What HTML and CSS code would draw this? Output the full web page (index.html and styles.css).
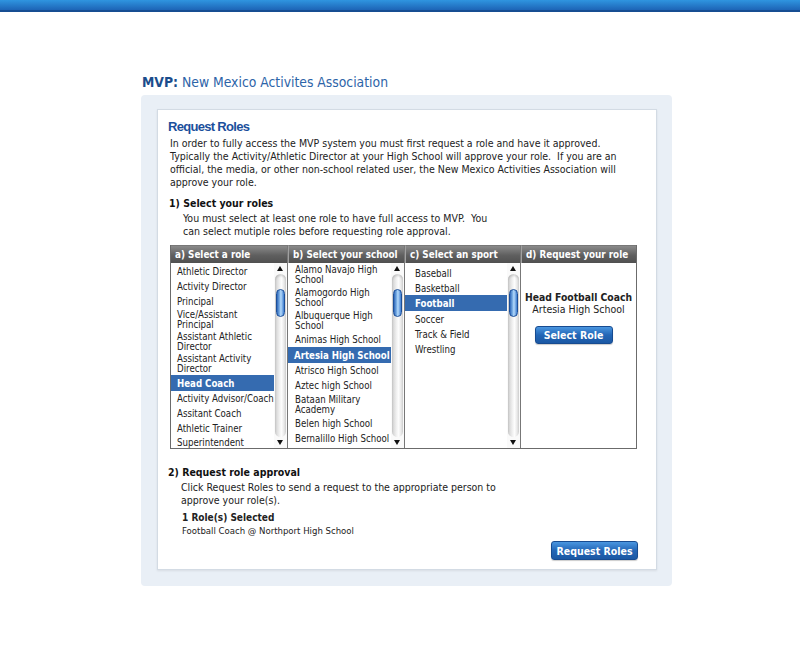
FILE: index.html
```html
<!DOCTYPE html>
<html>
<head>
<meta charset="utf-8">
<link rel="stylesheet" href="styles.css">
</head>
<body>
<div class="topbar"></div>
<div class="page">
  <h1 class="title"><b>MVP:</b> New Mexico Activites Association</h1>
  <div class="outer">
    <div class="inner">
      <h2 class="heading">Request Roles</h2>
      <p class="intro">In order to fully access the MVP system you must first request a role and have it approved. Typically the Activity/Athletic Director at your High School will approve your role.&nbsp; If you are an official, the media, or other non-school related user, the New Mexico Activities Association will approve your role.</p>
      <h3 class="step">1) Select your roles</h3>
      <p class="sub">You must select at least one role to have full access to MVP.&nbsp; You can select mutiple roles before requesting role approval.</p>

      <div class="picker">
        <div class="col">
          <div class="colhead">a) Select a role</div>
          <div class="colbody">
            <ul class="list roles">
              <li>Athletic Director</li>
              <li>Activity Director</li>
              <li>Principal</li>
              <li class="two">Vice/Assistant<br>Principal</li>
              <li class="two">Assistant Athletic<br>Director</li>
              <li class="two">Assistant Activity<br>Director</li>
              <li class="sel">Head Coach</li>
              <li>Activity Advisor/Coach</li>
              <li>Assitant Coach</li>
              <li>Athletic Trainer</li>
              <li class="lastitem">Superintendent</li>
            </ul>
            <div class="scroll"><div class="arrow up"></div><div class="track"><div class="thumb"></div></div><div class="arrow down"></div></div>
          </div>
        </div>
        <div class="col">
          <div class="colhead">b) Select your school</div>
          <div class="colbody">
            <ul class="list schools">
              <li class="two">Alamo Navajo High<br>School</li>
              <li class="two">Alamogordo High<br>School</li>
              <li class="two">Albuquerque High<br>School</li>
              <li>Animas High School</li>
              <li class="sel">Artesia High School</li>
              <li>Atrisco High School</li>
              <li>Aztec high School</li>
              <li class="two">Bataan Military<br>Academy</li>
              <li>Belen high School</li>
              <li>Bernalillo High School</li>
            </ul>
            <div class="scroll"><div class="arrow up"></div><div class="track"><div class="thumb"></div></div><div class="arrow down"></div></div>
          </div>
        </div>
        <div class="col">
          <div class="colhead">c) Select an sport</div>
          <div class="colbody">
            <ul class="list sports">
              <li>Baseball</li>
              <li>Basketball</li>
              <li class="sel">Football</li>
              <li>Soccer</li>
              <li>Track &amp; Field</li>
              <li>Wrestling</li>
            </ul>
            <div class="scroll"><div class="arrow up"></div><div class="track"><div class="thumb"></div></div><div class="arrow down"></div></div>
          </div>
        </div>
        <div class="col last">
          <div class="colhead">d) Request your role</div>
          <div class="colbody request">
            <div class="chosen"><b>Head Football Coach</b><span>Artesia High School</span></div>
            <button class="btn">Select Role</button>
          </div>
        </div>
      </div>

      <h3 class="step step2">2) Request role approval</h3>
      <p class="sub sub2">Click Request Roles to send a request to the appropriate person to approve your role(s).</p>
      <div class="selected">
        <b>1 Role(s) Selected</b>
        <span>Football Coach @ Northport High School</span>
      </div>
      <div class="actions"><button class="btn big">Request Roles</button></div>
    </div>
  </div>
</div>
</body>
</html>
```
FILE: styles.css
```css
html, body { margin: 0; padding: 0; background: #fff; }
body { font-family: "DejaVu Sans Condensed", "DejaVu Sans", sans-serif; color: #222; }

.topbar {
  height: 10px;
  background: linear-gradient(#2f95e0, #1d64b6);
  border-bottom: 2px solid #164d92;
}

.page { margin-left: 141px; width: 531px; }

.title {
  margin: 61px 0 0 1px;
  font-size: 13.8px;
  line-height: 18px;
  font-weight: normal;
  color: #2d64a8;
}
.title b { color: #1b4d8c; }

.outer {
  margin-top: 4px;
  background: #e9eff6;
  border-radius: 4px;
  padding: 14px 15px 16px 16px;
}
.inner {
  background: #fff;
  border: 1px solid #d3dbe4;
  box-shadow: 0 1px 2px rgba(0,0,0,0.08);
  height: 459px;
  box-sizing: content-box;
  padding: 0 19px 0 10px;
}

.heading {
  margin: 0;
  padding-top: 9px;
  font-family: "Liberation Sans", sans-serif;
  font-size: 13px;
  line-height: 16px;
  letter-spacing: -0.7px;
  color: #1b4f9c;
}
.intro {
  margin: 2px 0 0 2px;
  font-size: 10.5px;
  line-height: 13px;
}
.step {
  margin: 8px 0 0 1px;
  font-size: 10.5px;
  line-height: 13px;
  font-weight: bold;
  color: #111;
}
.sub {
  margin: 2px 0 0 15px;
  width: 320px;
  font-size: 10.5px;
  line-height: 13px;
}

.picker {
  margin: 7px 0 0 2px;
  width: 465px;
  display: grid;
  grid-template-columns: 117px 117px 116px 1fr;
  border: 1px solid #6b6b6b;
  border-top: 0;
}
.col { border-right: 1px solid #777; display: flex; flex-direction: column; min-width: 0; }
.col.last { border-right: 0; }
.colhead {
  height: 17px;
  line-height: 17px;
  padding-left: 4px;
  background: linear-gradient(#8a8a8a, #5f5f5f 55%, #505050);
  border-top: 1px solid #777;
  border-left: 1px solid #a0a0a0;
  color: #fff;
  font-weight: bold;
  font-size: 9.8px;
  white-space: nowrap;
  overflow: hidden;
}
.col:first-child .colhead { border-left: 0; }
.colbody { display: flex; height: 185px; }

.list {
  list-style: none;
  margin: 0;
  padding: 2px 0 0;
  flex: 1;
  min-width: 0;
  font-size: 9.6px;
  overflow: hidden;
  white-space: nowrap;
}
.list li {
  padding: 3px 0 3px 6px;
  line-height: 9px;
}
.list li.two {
  padding-top: 1px;
  padding-bottom: 1px;
  line-height: 10px;
}
.list li.sel {
  background: #356bb0;
  color: #fff;
  font-weight: bold;
  padding-top: 4px;
  padding-bottom: 3px;
}
.roles { padding-top: 1px; overflow: visible; }
.roles li.lastitem { padding-top: 2px; padding-bottom: 0; }
.schools { padding-top: 0; }
.schools li { padding-left: 7px; }
.schools li.two { padding-top: 2px; padding-bottom: 1px; }
.schools li.sel { padding-left: 6px; }
.sports li { padding: 4px 0 2px 10px; }
.sports li.sel { padding: 4px 0 3px 10px; }

.scroll {
  width: 13px;
  flex: none;
  display: flex;
  flex-direction: column;
  background: #fafafa;
}
.arrow { height: 11px; position: relative; }
.arrow::after {
  content: "";
  position: absolute;
  left: 3px;
  border-left: 3px solid transparent;
  border-right: 3px solid transparent;
}
.arrow.up::after { top: 3px; border-bottom: 5px solid #111; }
.arrow.down::after { top: 3px; border-top: 5px solid #111; }
.track {
  flex: 1;
  margin: 0 1px;
  border-radius: 6px;
  background: linear-gradient(90deg, #cfcfcf, #f4f4f4 45%, #fdfdfd 60%, #d8d8d8);
  box-shadow: inset 0 2px 2px rgba(0,0,0,0.15);
  padding-top: 15px;
}
.thumb {
  width: 9px;
  margin-left: 1px;
  height: 28px;
  border-radius: 5px;
  border: 1px solid #1c4f99;
  box-sizing: border-box;
  background: linear-gradient(90deg, #2c66b8, #8ec0f0 45%, #b9dcfb 55%, #3c7cd0);
}

.request {
  flex-direction: column;
  align-items: center;
  padding-top: 28px;
  box-sizing: border-box;
}
.chosen {
  display: flex;
  flex-direction: column;
  align-items: center;
  font-size: 10.5px;
  line-height: 12px;
}
.chosen b { font-size: 10.3px; }
.btn {
  font-family: "DejaVu Sans Condensed", "DejaVu Sans", sans-serif;
  background: linear-gradient(#4a96e0, #2366b6 50%, #1b58a4);
  border: 1px solid #174b90;
  border-radius: 3px;
  color: #fff;
  font-weight: bold;
  font-size: 10.5px;
  height: 18px;
  padding: 0;
  margin: 11px 10px 0 0;
  width: 78px;
  box-shadow: 0 1px 1px rgba(0,0,0,0.2);
}

.step2 { margin-top: 17px; margin-left: 0; }
.sub2 { margin-left: 13px; width: 340px; }
.selected {
  margin: 4px 0 0 14px;
  display: flex;
  flex-direction: column;
  line-height: 13px;
}
.selected b { font-size: 10px; }
.selected span { font-size: 9.5px; }
.actions { display: flex; justify-content: flex-end; margin-top: 4px; }
.btn.big { width: 87px; height: 19px; margin: 0 -1px 0 0; }
```
